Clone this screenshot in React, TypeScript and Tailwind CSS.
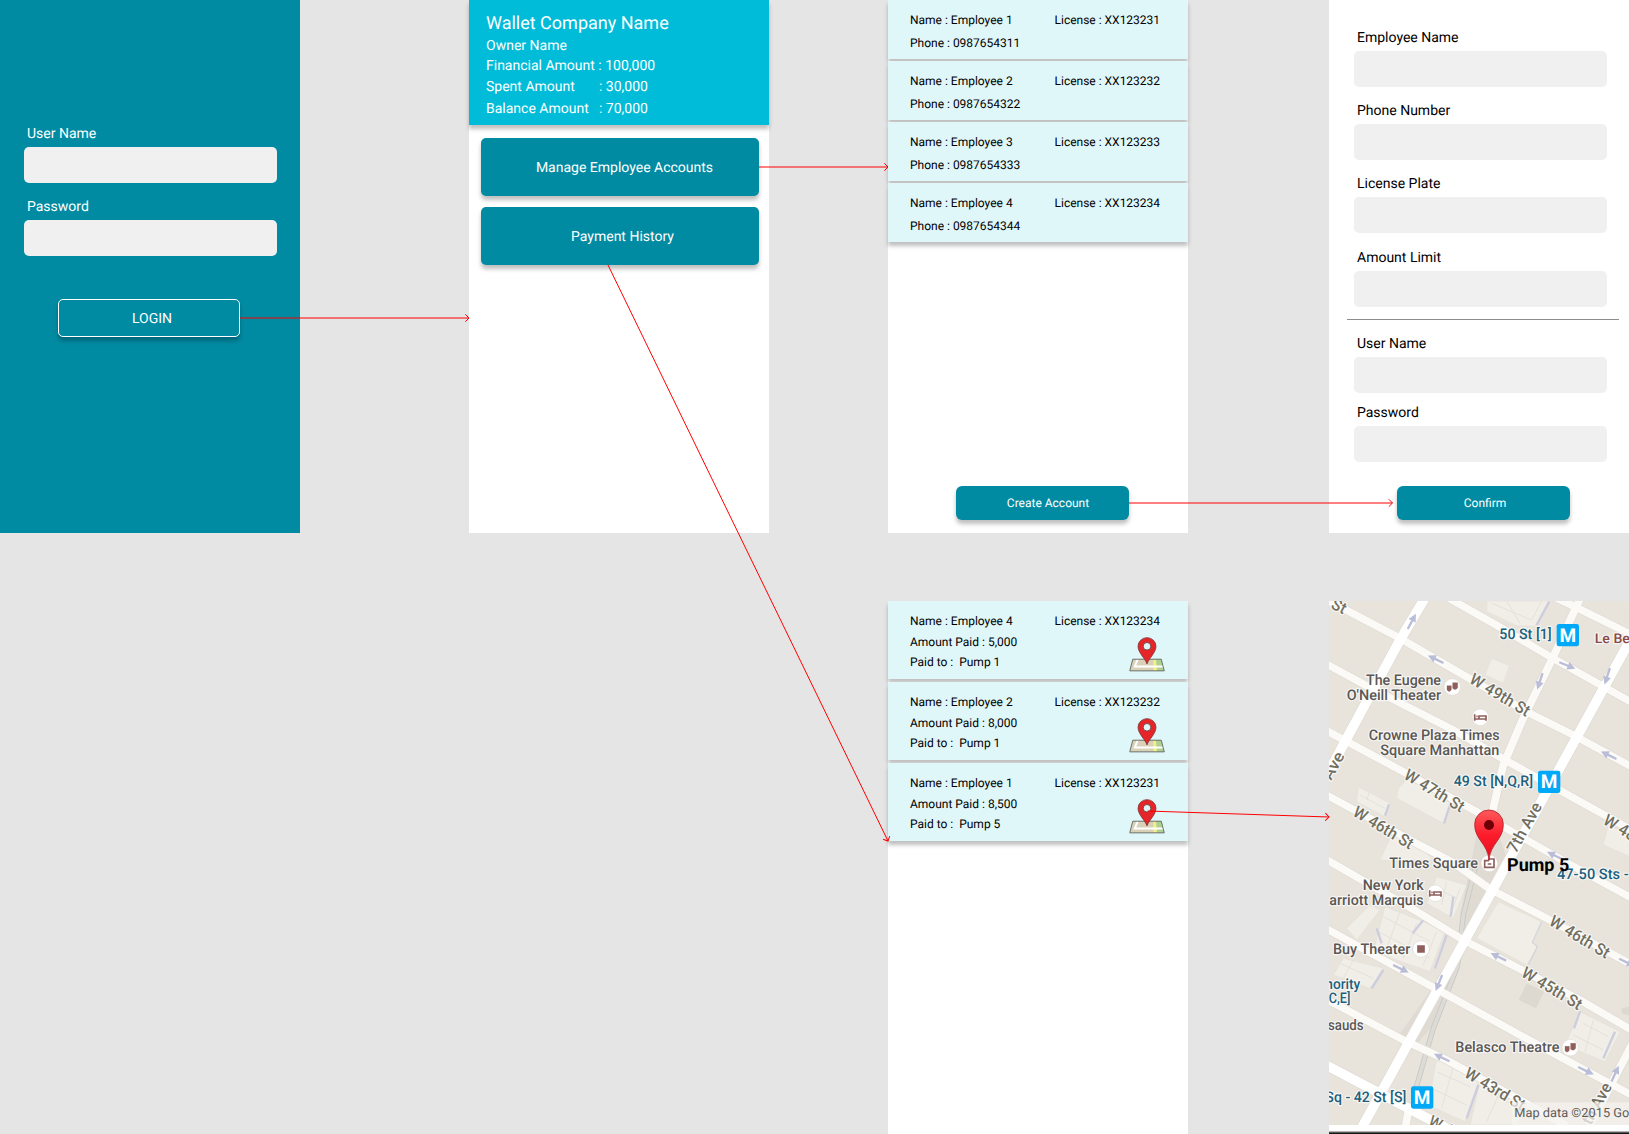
import type { ReactNode } from "react";

const employees = [
  { name: "Employee 1", license: "XX123231", phone: "0987654311" },
  { name: "Employee 2", license: "XX123232", phone: "0987654322" },
  { name: "Employee 3", license: "XX123233", phone: "0987654333" },
  { name: "Employee 4", license: "XX123234", phone: "0987654344" },
];

const payments = [
  { name: "Employee 4", license: "XX123234", amount: "5,000", pump: "Pump 1" },
  { name: "Employee 2", license: "XX123232", amount: "8,000", pump: "Pump 1" },
  { name: "Employee 1", license: "XX123231", amount: "8,500", pump: "Pump 5" },
];

function Field({ label, className = "" }: { label: string; className?: string }) {
  return (
    <label className={`flex w-[253px] flex-col gap-[5px] ${className}`}>
      <span className="pt-px pl-[3px] text-sm/4 whitespace-nowrap">{label}</span>
      <input className="h-9 w-full rounded-[5px] bg-[#f0f0f0] outline-none" />
    </label>
  );
}

function SmallButton({ children, className = "" }: { children: ReactNode; className?: string }) {
  return (
    <button
      className={`h-[34px] w-[173px] rounded-[6px] bg-[#008ba3] text-center text-xs text-white shadow-[0_4px_4px_rgba(0,0,0,0.25)] [text-rendering:inherit] ${className}`}
    >
      {children}
    </button>
  );
}

function LoginScreen() {
  return (
    <section className="flex h-[533px] w-[300px] flex-col bg-[#008ba3] pt-[125px] pl-6 text-white">
      <Field label="User Name" />
      <Field label="Password" className="mt-[15px]" />
      <button className="mt-[43px] ml-[34px] h-[38px] w-[182px] rounded-[5px] border border-white pt-0.5 pl-1.5 text-sm/4 shadow-[0_4px_4px_rgba(0,0,0,0.25)] [text-rendering:inherit]">
        LOGIN
      </button>
    </section>
  );
}

function WalletScreen() {
  return (
    <section className="flex h-[533px] w-[300px] flex-col bg-white text-white">
      <header className="flex h-[125px] shrink-0 flex-col bg-[#00bcd8] pt-[13px] pl-[17px] whitespace-pre shadow-[0_4px_4px_rgba(0,0,0,0.25)]">
        <h1 className="text-lg/[21px]">Wallet Company Name</h1>
        <p className="mt-1 text-sm/4">Owner Name</p>
        <p className="mt-1 text-sm/4">Financial Amount : 100,000</p>
        <p className="mt-[5px] flex text-sm/4">
          <span className="w-[113px]">Spent Amount</span>: 30,000
        </p>
        <p className="mt-1.5 flex text-sm/4">
          <span className="w-[113px]">Balance Amount</span>: 70,000
        </p>
      </header>
      <div className="flex flex-col gap-[11px] pt-[13px] pl-3 text-sm">
        <button className="h-[58px] w-[278px] rounded-[5px] bg-[#008ba3] pt-0.5 pl-[9px] shadow-[0_4px_4px_rgba(0,0,0,0.25)] [text-rendering:inherit]">
          Manage Employee Accounts
        </button>
        <button className="h-[58px] w-[278px] rounded-[5px] bg-[#008ba3] pt-0.5 pl-[5px] shadow-[0_4px_4px_rgba(0,0,0,0.25)] [text-rendering:inherit]">
          Payment History
        </button>
      </div>
    </section>
  );
}

function EmployeesScreen() {
  return (
    <section className="flex h-[533px] w-[300px] flex-col bg-white text-xs/[14px]">
      <ul className="flex flex-col gap-0.5">
        {employees.map((e) => (
          <li
            key={e.name}
            className="flex h-[59px] flex-col gap-[9px] bg-[#e0f7fa] pt-[13px] pl-[22px] shadow-[0_4px_4px_rgba(0,0,0,0.25)]"
          >
            <div className="flex">
              <span className="w-[144.5px]">Name : {e.name}</span>
              <span>License : {e.license}</span>
            </div>
            <span>Phone : {e.phone}</span>
          </li>
        ))}
      </ul>
      <SmallButton className="mt-auto mb-[13px] ml-[68px] pl-[11px]">Create Account</SmallButton>
    </section>
  );
}

function AccountFormScreen() {
  return (
    <section className="flex h-[533px] w-[300px] flex-col bg-white pt-[29px] pl-[25px]">
      <Field label="Employee Name" />
      <Field label="Phone Number" className="mt-[15px]" />
      <Field label="License Plate" className="mt-[15px]" />
      <Field label="Amount Limit" className="mt-4" />
      <hr className="mt-3 ml-[-7px] w-[272px] border-t border-[#8c8c8c]" />
      <Field label="User Name" className="mt-[15px]" />
      <Field label="Password" className="mt-[11px]" />
      <SmallButton className="mt-6 ml-[43px] pl-[3px]">Confirm</SmallButton>
    </section>
  );
}

function MapPinIcon() {
  return (
    <svg viewBox="0 0 108 104" className="h-[34.5px] w-9">
      <path d="M11 67H97L106 102H2Z" fill="#d9d0b8" />
      <path d="M78 67H97L106 102H84Z" fill="#aed193" />
      <path d="M73 67H81L84 102H74Z" fill="#f2f284" />
      <path d="M26 67L17 89H106" fill="none" stroke="#fff" strokeWidth="6" />
      <path d="M11 67H97L106 102H2Z" fill="none" stroke="#6b7068" strokeWidth="3" />
      <path
        d="M54 81C50 66 27 48 27 28A27 26 0 0 1 81 28C81 48 58 66 54 81Z"
        fill="#e52528"
        stroke="#7c3034"
        strokeWidth="2.5"
      />
      <circle cx="54" cy="28" r="11.5" fill="#e0f7fa" stroke="#7c4548" strokeWidth="3" />
    </svg>
  );
}

function PaymentsScreen() {
  return (
    <section className="flex h-[533px] w-[300px] flex-col bg-white text-xs/[14px]">
      <ul className="flex flex-col gap-[3px]">
        {payments.map((p) => (
          <li
            key={p.name}
            className="flex h-[78px] bg-[#e0f7fa] pt-[13px] pl-[22px] shadow-[0_4px_4px_rgba(0,0,0,0.25)]"
          >
            <div className="flex w-[144.5px] flex-col whitespace-pre">
              <span>Name : {p.name}</span>
              <span className="mt-[7px]">Amount Paid : {p.amount}</span>
              <span className="mt-1.5">Paid to :  {p.pump}</span>
            </div>
            <div className="flex flex-col">
              <span>License : {p.license}</span>
              <div className="mt-[9px] ml-[74.5px]">
                <MapPinIcon />
              </div>
            </div>
          </li>
        ))}
      </ul>
    </section>
  );
}

const streets = [
  "M690 0L775 40L940 122",
  "M370 0L560 108L690 185L940 325",
  "M27 18L240 130L620 350L760 420L940 518",
  "M10 202L145 275L400 405L550 492L940 708",
  "M10 402L250 530L470 650L580 712L740 803L940 912",
  "M10 595L280 740L400 803L510 882L690 975L940 1112",
  "M10 788L300 955L430 1035L600 1122L780 1215L940 1308",
  "M10 996L345 1180L700 1375L860 1460L940 1503",
  "M10 1208L260 1340L380 1395L600 1515L740 1592",
];

const buildings = [
  "M500 18H685L645 95L590 92L500 50Z",
  "M515 190L568 212L550 265L495 240Z",
  "M235 580L270 545L390 625L370 685L230 610Z",
  "M115 575L210 625L195 665L110 620Z",
  "M215 720L300 755L340 795H180Z",
  "M865 690L930 720V785L850 750Z",
  "M350 845L440 870L400 970L320 925Z",
  "M195 935L310 980L375 1010L330 1130L160 1070Z",
  "M80 1000L150 930L180 945L110 1035Z",
  "M535 920L665 980L640 1045L652 1055L620 1110L470 1030Z",
  "M70 1090L190 1120L150 1180L40 1140Z",
  "M780 1250L900 1310L855 1400L735 1350Z",
  "M350 1390L480 1450L435 1580L325 1530Z",
  "M480 1460L620 1530L590 1590H450Z",
];

const buildingEdges = [
  "M688 20L650 90",
  "M390 630L372 685",
  "M207 628L195 662",
  "M400 905L392 965",
  "M310 975L278 1015",
  "M170 1000L185 1045",
  "M380 1020L345 1120",
  "M190 1125L155 1180",
  "M885 1310L850 1390",
  "M780 1250L762 1300",
  "M475 1470L440 1570",
];

const buildingLines = [
  "M515 25L635 75L665 18M560 18L600 85",
  "M120 600L195 640M150 585L140 615",
  "M350 880L410 910M380 860L365 930M420 880L395 950",
  "M190 965L330 1040M240 950L200 1060M290 985L250 1090M175 1010L330 1090M350 1010L310 1110",
  "M60 1105L160 1150M100 1095L70 1150",
  "M790 1285L865 1325M760 1320L850 1365M820 1275L795 1370",
  "M350 1430L450 1475M335 1480L440 1530M400 1415L365 1540",
  "M500 1490L600 1540M540 1490L500 1580",
];

const arrows: [number, number, number][] = [
  [275, 80, -62],
  [348, 193, 206],
  [741, 211, 22],
  [660, 258, 108],
  [862, 243, 108],
  [867, 481, 206],
  [705, 782, 206],
  [536, 1086, 206],
  [242, 1121, 26],
  [357, 1163, 112],
  [366, 1388, 206],
  [797, 1427, 26],
  [885, 1437, -65],
  [920, 1102, 26],
];

const placeNames: [string, number, number, number][] = [
  ["The Eugene", 138, 271, 225],
  ["O'Neill Theater", 80, 314, 283],
  ["Crowne Plaza Times", 146, 436, 393],
  ["Square Manhattan", 181, 479, 357],
  ["Times Square", 208, 818, 266],
  ["New York", 128, 886, 183],
  ["arriott Marquis", 28, 930, 283],
  ["Buy Theater", 39, 1078, 232],
  ["sauds", 24, 1306, 107],
  ["Belasco Theatre", 406, 1371, 312],
];

const stationNames: [string, number, number, number][] = [
  ["50 St [1]", 538, 133, 157],
  ["49 St [N,Q,R]", 401, 573, 238],
  ["47-50 Sts -", 711, 853, 215],
  ["nority", 16, 1182, 105],
  ["C,E]", 26, 1224, 65],
  ["Sq - 42 St [S]", 16, 1522, 243],
];

const streetNames: [string, number, number, number, number][] = [
  ["W 49th St", 445, 262, 31, 202],
  ["W 47th St", 248, 549, 31, 202],
  ["W 46th St", 95, 660, 31, 202],
  ["W 48th St", 846, 685, 31, 202],
  ["W 46th St", 684, 988, 31, 202],
  ["W 45th St", 601, 1142, 31, 202],
  ["W 43rd St", 430, 1444, 31, 202],
  ["7th Ave", 588, 777, -61, 164],
  ["Ave", 33, 558, -61, 87],
  ["th Ave", 812, 1592, -61, 134],
  ["St", 30, 38, 27, 44],
  ["W 42nd St", 322, 1590, 27, 200],
];

const metros: [number, number][] = [
  [710, 87],
  [654, 527],
  [273, 1474],
];

const masks = "M-16 -4H-3V8Q-9 18-16 9ZM1-13H16V2Q9 12 1 4Z";
const bed = "M-17 -9V10M-17 5H17M17 10V-4H-4V4M-12 -3H-8";

const pois: [number, number, string][] = [
  [397, 276, masks],
  [481, 367, bed],
  [508, 805, "M-14 12V-8H-3L0-13H14V12ZM-5 2H6"],
  [346, 895, bed],
  [303, 1062, "M-9-9H9V9H-9Z"],
  [751, 1358, masks],
];

// Drawn in units of a third of a pixel.
function MapScreen() {
  return (
    <section className="h-[533px] w-[300px] overflow-hidden bg-white">
      <svg viewBox="27 18 900 1599" className="h-[533px] w-[300px]" fontFamily="Roboto, sans-serif">
        <defs>
          <clipPath id="map-area">
            <rect x="27" y="18" width="900" height="1572" />
          </clipPath>
          <linearGradient id="pin-red" x1="0" y1="0" x2="0" y2="1">
            <stop offset="0" stopColor="#ff5a5c" />
            <stop offset="0.5" stopColor="#fc1c2c" />
            <stop offset="1" stopColor="#e80a1c" />
          </linearGradient>
        </defs>
        <g clipPath="url(#map-area)">
          <rect x="27" y="18" width="900" height="1572" fill="#e8e4dc" />
          <path d="M470 720L540 730L560 790L430 1010L420 960ZM400 1090L440 1060L340 1290L270 1370L230 1330Z" fill="#dfdad2" />
          <path d="M620 1165L672 1190L648 1240L596 1215Z" fill="#ddd8d0" />
          <path d="M905 1240L927 1235V1262L905 1255Z" fill="#ddd8d0" />
          {buildings.map((d) => (
            <path key={d} d={d} fill="#f0eee7" stroke="#e4e1da" strokeWidth="2" />
          ))}
          {buildingLines.map((d) => (
            <path key={d} d={d} fill="none" stroke="#e0deda" strokeWidth="2.5" />
          ))}
          {buildingEdges.map((d) => (
            <path key={d} d={d} fill="none" stroke="#cdcdde" strokeWidth="7" />
          ))}
          <path d="M665 980L637 1042L652 1055L625 1110" fill="none" stroke="#d2d2dd" strokeWidth="3.5" />
          <path d="M468 810L430 960L412 1115L340 1300L288 1480" fill="none" stroke="#c9c7c2" strokeWidth="16" />
          <path d="M468 810L430 960L412 1115L340 1300L288 1480" fill="none" stroke="#dddbd6" strokeWidth="11" />
          {streets.map((d) => (
            <path key={d} d={d} fill="none" stroke="#e1ddd5" strokeWidth="27" />
          ))}
          <path
            d="M785 0L700 185L605 380L550 510L515 660M940 1340L800 1610M268 1530L256 1600"
            fill="none"
            stroke="#e1ddd5"
            strokeWidth="28"
          />
          <path d="M320 0L240 135L75 440L0 580M940 118L110 1626M10 1406L170 1490L380 1600" fill="none" stroke="#e1ddd5" strokeWidth="34" />
          {streets.map((d) => (
            <path key={d} d={d} fill="none" stroke="#fbfaf7" strokeWidth="22" />
          ))}
          <path
            d="M785 0L700 185L605 380L550 510L515 660M940 1340L800 1610M268 1530L256 1600"
            fill="none"
            stroke="#fbfaf7"
            strokeWidth="23"
          />
          <path d="M320 0L240 135L75 440L0 580M940 118L110 1626M10 1406L170 1490L380 1600" fill="none" stroke="#fff" strokeWidth="29" />
          {arrows.map(([x, y, angle]) => (
            <path
              key={`${x}-${y}`}
              d="M-25-3.5H3V-12L27 0L3 12V3.5H-25Z"
              transform={`translate(${x} ${y}) rotate(${angle})`}
              fill="#babdd8"
            />
          ))}
          <g
            stroke="#fff"
            strokeOpacity="0.7"
            strokeWidth="7"
            strokeLinejoin="round"
            paintOrder="stroke"
            fontWeight="500"
          >
            <g fill="#726f60" fontSize="49">
              {streetNames.map(([label, x, y, angle, width]) => (
                <text
                  key={`${label}-${x}`}
                  transform={`translate(${x} ${y}) rotate(${angle})`}
                  textLength={width}
                  lengthAdjust="spacingAndGlyphs"
                >
                  {label}
                </text>
              ))}
            </g>
            <g fill="#5a5754" fontSize="44">
              {placeNames.map(([label, x, y, width]) => (
                <text key={label} x={x} y={y} textLength={width} lengthAdjust="spacingAndGlyphs">
                  {label}
                </text>
              ))}
            </g>
            <g fill="#20607b" fontSize="44">
              {stationNames.map(([label, x, y, width]) => (
                <text key={label} x={x} y={y} textLength={width} lengthAdjust="spacingAndGlyphs">
                  {label}
                </text>
              ))}
            </g>
            <text x="824" y="143" fill="#8a4b49" fontSize="40" textLength="240" lengthAdjust="spacingAndGlyphs">
              Le Bernardin
            </text>
          </g>
          {metros.map(([x, y]) => (
            <g key={x}>
              <rect x={x} y={y} width="67" height="67" rx="7" fill="#00a8f8" />
              <text x={x + 33.5} y={y + 53} textAnchor="middle" fontSize="57" fontWeight="700" fill="#fff">
                M
              </text>
            </g>
          ))}
          {pois.map(([x, y, d]) => (
            <g key={x} transform={`translate(${x} ${y})`}>
              <circle r="25" fill="#fff" stroke="#dedad3" strokeWidth="2" />
              <path d={d} fill={d.endsWith("Z") ? "#8f5f5c" : "none"} stroke="#8f5f5c" strokeWidth={d === masks ? 1 : 5} />
            </g>
          ))}
          <rect x="575" y="1522" width="352" height="68" fill="#f5f3ef" fillOpacity="0.75" />
          <text x="583" y="1567" fontSize="38" fill="#5e5b58" textLength="418" lengthAdjust="spacingAndGlyphs">
            Map data ©2015 Google
          </text>
          <path
            d="M507 795C503 745 464 735 464 688A43 43 0 0 1 550 688C550 735 511 745 507 795Z"
            fill="url(#pin-red)"
            stroke="#b3202a"
            strokeWidth="2.5"
          />
          <circle cx="507" cy="690" r="15" fill="#6c0006" />
        </g>
        <text x="561" y="827" fontSize="54" fontWeight="700" fill="#000" textLength="187">
          Pump 5
        </text>
        <rect x="27" y="1609" width="900" height="3" fill="#8e8e8e" />
        <rect x="27" y="1612" width="900" height="6" fill="#161616" />
      </svg>
    </section>
  );
}

const links: [number, number, number, number][] = [
  [240, 318, 469, 318],
  [759, 167, 888, 167],
  [608, 265, 888, 841],
  [1129, 503, 1392.5, 503],
  [1147.5, 811, 1329, 817],
];

function FlowArrows() {
  return (
    <svg
      viewBox="0 0 1629 1134"
      className="pointer-events-none absolute inset-0 h-[1134px] w-[1629px]"
      fill="none"
      stroke="#ff0000"
    >
      <defs>
        <marker id="arrow-head" markerUnits="userSpaceOnUse" markerWidth="8" markerHeight="10" refX="5" refY="5" orient="auto">
          <path d="M1.3 1.3L5 5L1.3 8.7" fill="none" stroke="#ff0000" />
        </marker>
      </defs>
      {links.map(([x1, y1, x2, y2]) => (
        <path key={x1} d={`M${x1} ${y1}L${x2} ${y2}`} markerEnd="url(#arrow-head)" />
      ))}
    </svg>
  );
}

export default function App() {
  return (
    <main className="relative grid h-[1134px] w-[1629px] grid-cols-[469px_419px_441px_300px] grid-rows-[601px_533px] overflow-hidden bg-[#e5e5e5] font-['Roboto',sans-serif] text-black [text-rendering:geometricPrecision]">
      <LoginScreen />
      <WalletScreen />
      <EmployeesScreen />
      <AccountFormScreen />
      <div className="col-start-3">
        <PaymentsScreen />
      </div>
      <MapScreen />
      <FlowArrows />
    </main>
  );
}
